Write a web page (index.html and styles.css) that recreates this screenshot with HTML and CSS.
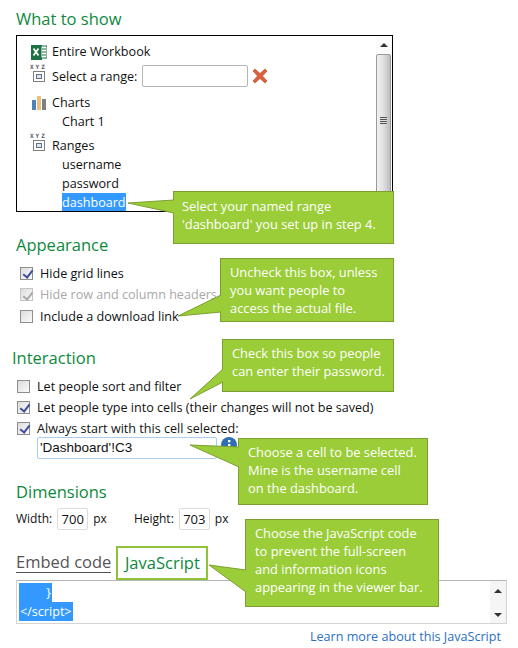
FILE: index.html
```html
<!DOCTYPE html>
<html lang="en">
<head>
<meta charset="utf-8">
<title>Embed options</title>
<link rel="stylesheet" href="styles.css">
</head>
<body>
<main class="page">
  <h2 class="heading first">What to show</h2>
  <div class="listbox">
    <div class="list-content">
      <div class="row r-workbook">
        <svg class="icon" width="16" height="16" viewBox="0 0 16 16"><rect x="0" y="1" width="11" height="15" fill="#1e7145"/><rect x="10" y="2" width="6" height="12" fill="#fff" stroke="#1e7145"/><path d="M11 5h4M11 8h4M11 11h4" stroke="#1e7145"/><path d="M2.5 4.5l5 7M7.5 4.5l-5 7" stroke="#fff" stroke-width="1.7"/></svg>
        <span>Entire Workbook</span>
      </div>
      <div class="row r-range">
        <svg class="icon xyz" width="17" height="20" viewBox="0 0 17 20"><text x="0" y="6" class="xyz-text">XYZ</text><rect x="3.5" y="8.5" width="11" height="10" fill="#fff" stroke="#7f7f7f"/><rect x="6.5" y="11.5" width="5" height="4" fill="#dbe5f1" stroke="#5f6f86"/></svg>
        <span>Select a range:</span>
        <span class="range-input"></span>
        <svg class="redx" width="16" height="16" viewBox="0 0 16 16"><path d="M3 1l5 4.500 5-4.500 2 2-4.500 5 4.500 5-2 2-5-4.500-5 4.500-2-2 4.500-5-4.500-5z" fill="#d9603b" stroke="#b5482a" stroke-width=".6"/></svg>
      </div>
      <div class="row r-charts">
        <svg class="icon" width="16" height="16" viewBox="0 0 16 16"><rect x="1" y="5" width="4" height="10" fill="#4f81bd"/><rect x="6" y="1" width="4" height="14" fill="#e9c07e"/><rect x="11" y="4" width="4" height="11" fill="#7f7f7f"/></svg>
        <span>Charts</span>
      </div>
      <div class="row child">Chart 1</div>
      <div class="row r-ranges">
        <svg class="icon xyz" width="17" height="20" viewBox="0 0 17 20"><text x="0" y="6" class="xyz-text">XYZ</text><rect x="3.5" y="8.5" width="11" height="10" fill="#fff" stroke="#7f7f7f"/><rect x="6.500" y="11.5" width="5" height="4" fill="#dbe5f1" stroke="#5f6f86"/></svg>
        <span>Ranges</span>
      </div>
      <div class="row child">username</div>
      <div class="row child">password</div>
      <div class="row child"><span class="selected">dashboard</span></div>
    </div>
    <div class="vscroll">
      <span class="arrow up"></span>
      <span class="thumb"><span class="grip"></span></span>
    </div>
  </div>

  <h2 class="heading appearance">Appearance</h2>
  <div class="checks indent-a">
    <label class="check"><span class="box on"></span>Hide grid lines</label>
    <label class="check muted"><span class="box on dim"></span>Hide row and column headers</label>
    <label class="check"><span class="box"></span>Include a download link</label>
  </div>

  <h2 class="heading interaction">Interaction</h2>
  <div class="checks indent-b">
    <label class="check"><span class="box"></span>Let people sort and filter</label>
    <label class="check"><span class="box on"></span>Let people type into cells (their changes will not be saved)</label>
    <label class="check"><span class="box on"></span>Always start with this cell selected:</label>
  </div>
  <div class="cell-row">
    <span class="cell-input">'Dashboard'!C3</span>
    <svg class="info" width="16" height="16" viewBox="0 0 16 16"><circle cx="8" cy="8" r="8" fill="#2f6db5"/><rect x="7" y="3" width="2.400" height="2.400" fill="#fff"/><rect x="7" y="7" width="2.400" height="6" fill="#fff"/></svg>
  </div>

  <h2 class="heading dimensions">Dimensions</h2>
  <div class="dims">
    <span>Width:</span><span class="num">700</span><span class="unit">px</span>
    <span class="h-label">Height:</span><span class="num">703</span><span class="unit">px</span>
  </div>

  <div class="tabs">
    <span class="tab-link">Embed code</span>
    <span class="tab-active">JavaScript</span>
  </div>
  <div class="codebox">
    <code class="code"><span class="sel l1">        }</span><span class="sel">&lt;/script&gt;</span></code>
    <div class="mini-scroll"><span class="arrow up"></span><span class="arrow down"></span></div>
  </div>
  <div class="learn"><a href="#">Learn more about this JavaScript</a></div>

  <div class="callout c1">
    <svg class="tail t1" width="48" height="18" viewBox="0 0 48 18"><path d="M47 3 L1 6 L47 16" class="tail-shape"/></svg>
    Select your named range<br>'dashboard' you set up in step 4.
  </div>
  <div class="callout c2">
    <svg class="tail t2" width="44" height="26" viewBox="0 0 44 26"><path d="M43 1 L0 22 L43 18" class="tail-shape"/></svg>
    Uncheck this box, unless<br>you want people to<br>access the actual file.
  </div>
  <div class="callout c3">
    <svg class="tail t3" width="34" height="34" viewBox="0 0 34 34"><path d="M33 1 L0 31 L33 14" class="tail-shape"/></svg>
    Check this box so people<br>can enter their password.
  </div>
  <div class="callout c4">
    <svg class="tail t4" width="50" height="30" viewBox="0 0 50 30"><path d="M49 9 L0 7 L49 29" class="tail-shape"/></svg>
    Choose a cell to be selected.<br>Mine is the username cell<br>on the dashboard.
  </div>
  <div class="callout c5">
    <svg class="tail t5" width="38" height="34" viewBox="0 0 38 34"><path d="M37 10 L0 5 L37 32" class="tail-shape"/></svg>
    Choose the JavaScript code<br>to prevent the full-screen<br>and information icons<br>appearing in the viewer bar.
  </div>
</main>
</body>
</html>
```
FILE: styles.css
```css
* { box-sizing: border-box; }
html, body { margin: 0; padding: 0; background: #fff; }
body { width: 518px; height: 648px; overflow: hidden; font-family: "Open Sans", "Noto Sans", sans-serif; font-size: 12.6px; color: #111; }
.page { position: relative; width: 518px; height: 648px; overflow: hidden; padding: 0 0 0 16px; }

.heading { margin: 0; font-size: 16.5px; line-height: 22px; font-weight: 400; color: #0d8a3c; }
.first { padding-top: 8px; height: 35px; }
.appearance { margin-top: 22px; }
.interaction { margin: 19.5px 0 0 -4px; }
.dimensions { margin-top: 22px; }

.listbox { width: 377px; height: 177px; border: 1px solid #000; display: flex; overflow: hidden; }
.list-content { flex: 1; padding: 6px 0 0 14px; }
.row { display: flex; align-items: center; height: 19px; white-space: nowrap; }
.row .icon { margin-right: 5px; flex: none; }
.r-range { height: 26px; margin-top: 2px; }
.r-charts { height: 19px; margin-top: 4px; }
.r-ranges { height: 19px; margin-top: 5px; }
.row.child { padding-left: 31px; }
.xyz { margin-top: -7px; margin-left: -1px; margin-right: 5px !important; }
.xyz-text { font: 700 6px "DejaVu Sans Mono", monospace; fill: #555; letter-spacing: 2px; }
.range-input { width: 106px; height: 22px; margin-left: 5px; border: 1px solid #b5b5b5; border-radius: 2px; background: #fff; }
.redx { margin-left: 4px; }
.selected { background: #3399ff; color: #fff; display: inline-block; line-height: 19px; height: 19px; }

.vscroll { position: relative; width: 16px; background: #fbfbfb; flex: none; }
.thumb { position: absolute; left: 0; top: 18px; width: 15px; height: 180px; border: 1px solid #9a9a9a; border-radius: 2px; background: linear-gradient(90deg, #f1f1f1, #e2e2e2 45%, #bdbdbd); }
.grip { position: absolute; left: 3px; top: 62px; width: 7px; height: 8px; background: repeating-linear-gradient(#555 0 1px, #ddd 1px 2px); }
.arrow { display: block; width: 0; height: 0; border-left: 4px solid transparent; border-right: 4px solid transparent; }
.arrow.up { border-bottom: 4px solid #333; }
.arrow.down { border-top: 4px solid #333; }
.vscroll .arrow { position: absolute; left: 4px; top: 7px; }

.checks { display: flex; flex-direction: column; }
.indent-a { margin: 6.5px 0 0 4px; }
.indent-b { margin: 7px 0 0 1px; }
.check { display: flex; align-items: center; height: 21.5px; white-space: nowrap; }
.indent-b .check { height: 21px; }
.box { position: relative; width: 13px; height: 13px; margin-right: 7px; border: 1px solid #8e8e8e; background: linear-gradient(135deg, #dcdcdc, #fbfbfb); flex: none; }
.box.on::after { content: ""; position: absolute; left: 3.5px; top: 0.5px; width: 4px; height: 8px; border: solid #3f4f9a; border-width: 0 2px 2px 0; transform: rotate(38deg); }
.box.dim { border-color: #c4c4c4; }
.box.dim::after { border-color: #a8a8a8; }
.muted { color: #a9a9a9; }

.cell-row { display: flex; align-items: flex-start; margin: -2px 0 0 21px; }
.cell-input { width: 180px; height: 22px; padding: 0 2px; border: 1px solid #a9cdea; border-radius: 2px; font: 13.500px/20px "Liberation Sans", Arial, sans-serif; color: #111; }
.info { margin: 0 0 0 4px; }

.dims { display: flex; align-items: center; height: 24px; margin-top: 4px; font-size: 12px; }
.num { width: 31px; height: 22px; margin-left: 5px; border: 1px solid #dcdcdc; border-radius: 2px; text-align: center; line-height: 20px; font-size: 13px; }
.unit { margin-left: 5px; }
.h-label { margin-left: 27px; }

.tabs { display: flex; align-items: center; height: 34px; margin-top: 15px; }
.tab-link { font-size: 16.5px; color: #555; border-bottom: 1px solid #555; line-height: 20px; }
.tab-active { margin-left: 5px; width: 92px; height: 34px; border: 2px solid #8fc43a; font-size: 16.5px; line-height: 30px; text-align: center; color: #0d8a3c; }

.codebox { position: relative; width: 491px; height: 44px; border: 1px solid #d4d4d4; border-top-color: #b5b5b5; padding: 2px; }
.code { display: flex; flex-direction: column; align-items: flex-start; font-family: "Open Sans", sans-serif; font-size: 12.6px; line-height: 19px; white-space: pre; }
.sel { background: #3399ff; color: #fff; padding: 0 1px; }
.mini-scroll { position: absolute; right: 0; top: 0; bottom: 0; width: 16px; background: #f5f5f5; display: flex; flex-direction: column; justify-content: space-between; align-items: center; padding: 8px 0 6px; }

.learn { margin: 4px 17px 0 0; text-align: right; }
.learn a { color: #2a6fc4; text-decoration: none; }

.callout { position: absolute; padding: 4px 9px 0; background: #9acd37; border: 1px solid #7c9f32; color: #fff; font-size: 12.85px; line-height: 18px; white-space: nowrap; }
.c1 { left: 173px; top: 191px; width: 221px; height: 53px; padding: 5px 8px 0; }
.c2 { left: 220px; top: 258px; width: 174px; height: 64px; }
.c3 { left: 222px; top: 339px; width: 172px; height: 53px; }
.c4 { left: 238px; top: 438px; width: 190px; height: 67px; }
.c5 { left: 245px; top: 519px; width: 194px; height: 88px; }

.tail { position: absolute; overflow: visible; }
.tail-shape { fill: #9acd37; stroke: #7c9f32; stroke-width: 1; }
.t1 { left: -47px; top: 5px; }
.t2 { left: -43px; top: 35px; }
.t3 { left: -33px; top: 28px; }
.t4 { left: -49px; top: -1px; }
.t5 { left: -37px; top: 40px; }
```
